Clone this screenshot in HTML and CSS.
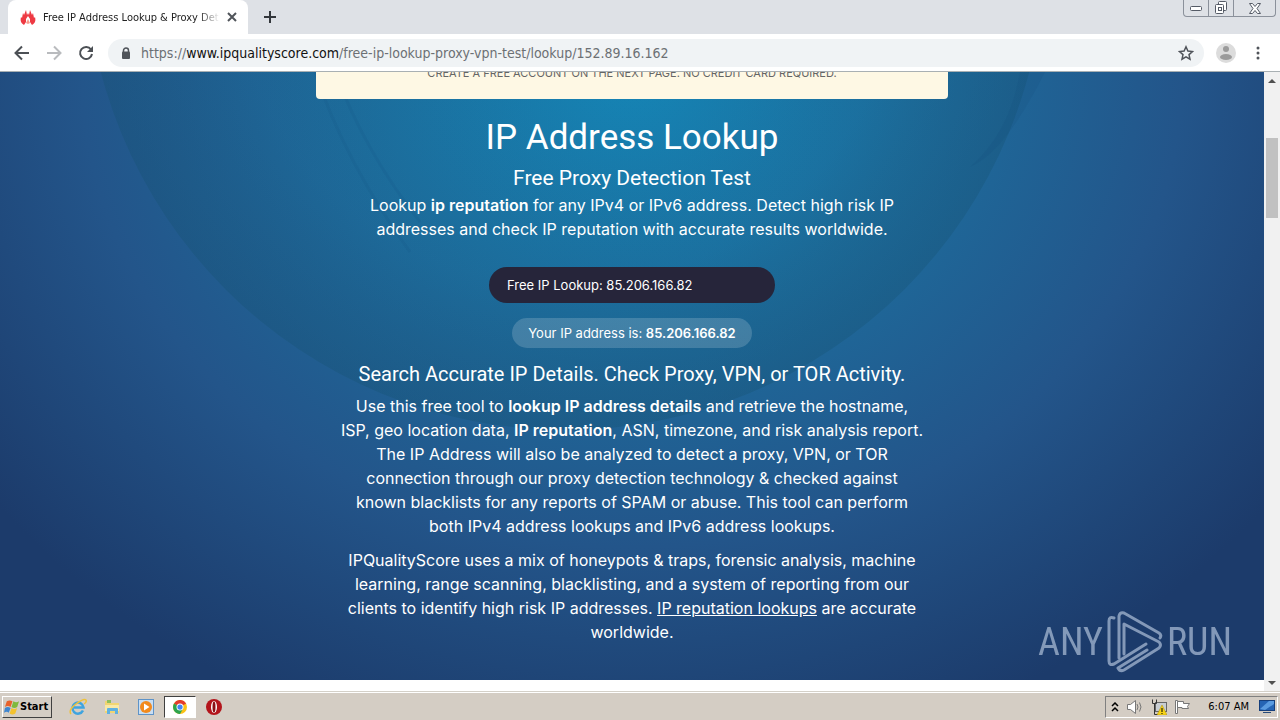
FILE: index.html
```html
<!DOCTYPE html>
<html lang="en">
<head>
  <meta charset="UTF-8" />
  <title>Free IP Address Lookup &amp; Proxy Detection Test</title>
  <link rel="stylesheet" href="styles.css">
</head>
<body>
  <!-- Browser tabs -->
  <header class="tab-strip">
    <div class="tab">
      <svg class="favicon" viewBox="0 0 16 16" width="16" height="16">
        <path fill="#ee3a43" d="M4 16C1 14 0 12 1 8l1 1 1-5 1 2L6 1l1 5 1-2 1 2 1-5 2 5 1-2 1 5 1-1c1 4 0 6-3 8l-2-3 0-3-2-3-2 3 0 3z"/>
        <path fill="#f99a8c" d="M6 14l2-4 2 4-2 1z"/>
      </svg>
      <span class="tab-title">Free IP Address Lookup &amp; Proxy Det</span>
      <button class="icon-btn tab-close" aria-label="Close tab">
        <svg viewBox="0 0 10 10" width="10" height="10"><path d="M1 1l8 8M9 1L1 9" stroke="#50545a" stroke-width="2"/></svg>
      </button>
    </div>
    <button class="icon-btn new-tab" aria-label="New tab">
      <svg viewBox="0 0 12 12" width="12" height="12"><path d="M6 0v12M0 6h12" stroke="#33373c" stroke-width="2"/></svg>
    </button>
    <div class="window-controls">
      <button class="icon-btn" aria-label="Minimize">
        <svg viewBox="0 0 12 5" width="12" height="5"><rect x=".5" y=".5" width="11" height="4" rx="1" fill="#fff" stroke="#555b66"/></svg>
      </button>
      <button class="icon-btn" aria-label="Restore">
        <svg viewBox="0 0 14 14" width="14" height="14" fill="#fff" stroke="#555b66"><rect x="4.500" y=".5" width="8" height="9" rx="1"/><rect x="1.500" y="3.500" width="8" height="9" rx="1"/><rect x="4.500" y="6.500" width="3" height="3"/></svg>
      </button>
      <button class="icon-btn close" aria-label="Close">
        <svg viewBox="0 0 12 11" width="12" height="11"><path d="M.5.5h3L6 3.500 8.500.5h3L8 5.500l3.500 5h-3L6 7.500l-2.500 3h-3l3.500-5z" fill="#fff" stroke="#555b66"/></svg>
      </button>
    </div>
  </header>

  <nav class="toolbar">
    <button class="icon-btn" aria-label="Back">
      <svg viewBox="0 0 16 16" width="16" height="16"><path d="M15 8H2M8 1.500L1.500 8 8 14.500" fill="none" stroke="#4c5055" stroke-width="2"/></svg>
    </button>
    <button class="icon-btn" aria-label="Forward">
      <svg viewBox="0 0 16 16" width="16" height="16"><path d="M1 8h13M8 1.500L14.500 8 8 14.500" fill="none" stroke="#b9bbbe" stroke-width="2"/></svg>
    </button>
    <button class="icon-btn" aria-label="Reload">
      <svg viewBox="0 0 16 16" width="16" height="16"><path d="M13 4.500A6 6 0 1 0 14 9" fill="none" stroke="#4c5055" stroke-width="2"/><path d="M15 1v6H9z" fill="#4c5055"/></svg>
    </button>
    <div class="address">
      <svg viewBox="0 0 10 12" width="10" height="12"><path d="M2.500 5V3.500a2.500 2.500 0 0 1 5 0V5" fill="none" stroke="#50545a" stroke-width="1.500"/><rect x="1" y="4.500" width="8" height="7.500" rx="1" fill="#50545a"/></svg>
      <span class="url">https://<b>www.ipqualityscore.com</b>/free-ip-lookup-proxy-vpn-test/lookup/152.89.16.162</span>
      <button class="icon-btn star" aria-label="Bookmark">
        <svg viewBox="0 0 16 16" width="16" height="16"><path d="M8 1.800l1.900 4.300 4.600.4-3.500 3.100 1 4.600L8 11.800l-4 2.400 1-4.600-3.500-3.100 4.600-.4z" fill="none" stroke="#50545a" stroke-width="1.500"/></svg>
      </button>
    </div>
    <button class="icon-btn avatar" aria-label="Profile">
      <svg viewBox="0 0 20 20" width="20" height="20"><circle cx="10" cy="10" r="10" fill="#dcdcdc"/><circle cx="10" cy="6" r="3" fill="#9b9b9b"/><ellipse cx="10" cy="14" rx="6" ry="3" fill="#9b9b9b"/></svg>
    </button>
    <button class="icon-btn menu" aria-label="Menu">
      <svg viewBox="0 0 4 14" width="4" height="14" fill="#50545a"><circle cx="2" cy="2" r="1.500"/><circle cx="2" cy="7" r="1.500"/><circle cx="2" cy="12" r="1.500"/></svg>
    </button>
  </nav>

  <!-- Page -->
  <div class="viewport">
    <main class="page">
      <div class="hero">
        <svg class="hero-bg" viewBox="0 0 1264 608" preserveAspectRatio="none" aria-hidden="true">
          <defs>
            <radialGradient id="rim" gradientUnits="userSpaceOnUse" cx="565" cy="-122" r="480">
              <stop offset=".7" stop-color="#14506e" stop-opacity=".06"/>
              <stop offset="1" stop-color="#14506e" stop-opacity=".3"/>
            </radialGradient>
          </defs>
          <circle cx="565" cy="-122" r="480" fill="url(#rim)"/>
          <path d="M315 0q30 90 95 180M335 0q30 80 85 150" fill="none" stroke="#134d78" stroke-opacity=".12" stroke-width="3"/>
          <path d="M1045 0q-40 80-75 95q40-35 50-95z" fill="#134d78" fill-opacity=".15"/>
        </svg>
        <div class="hero-inner">
          <div class="banner">CREATE A FREE ACCOUNT ON THE NEXT PAGE. NO CREDIT CARD REQUIRED.</div>
          <h1>IP Address Lookup</h1>
          <h2>Free Proxy Detection Test</h2>
          <p class="lead">Lookup <b>ip reputation</b> for any IPv4 or IPv6 address. Detect high risk IP<br>addresses and check IP reputation with accurate results worldwide.</p>
          <input class="lookup" type="text" aria-label="Free IP Lookup" value="Free IP Lookup: 85.206.166.82">
          <div class="your-ip">Your IP address is: <b>85.206.166.82</b></div>
          <h3>Search Accurate IP Details. Check Proxy, VPN, or TOR Activity.</h3>
          <p>Use this free tool to <b>lookup IP address details</b> and retrieve the hostname,<br>ISP, geo location data, <b>IP reputation</b>, ASN, timezone, and risk analysis report.<br>The IP Address will also be analyzed to detect a proxy, VPN, or TOR<br>connection through our proxy detection technology &amp; checked against<br>known blacklists for any reports of SPAM or abuse. This tool can perform<br>both IPv4 address lookups and IPv6 address lookups.</p>
          <p>IPQualityScore uses a mix of honeypots &amp; traps, forensic analysis, machine<br>learning, range scanning, blacklisting, and a system of reporting from our<br>clients to identify high risk IP addresses. <a href="#">IP reputation lookups</a> are accurate<br>worldwide.</p>
        </div>
      </div>
      <div class="watermark">
        <span>ANY</span>
        <svg viewBox="0 0 56 64" width="56" height="64" fill="none" stroke="currentColor" stroke-width="3" stroke-linejoin="round" stroke-linecap="round">
          <path d="M7 8Q2 6 2 11v40q0 5 5 3l32-20"/>
          <path d="M12 48V6q1-4 5-3l35 20q3 2 1 5"/>
          <path d="M17 44V14l35 18q3 3 0 6L17 60q-4 2-6-2l29-18"/>
        </svg>
        <span>RUN</span>
      </div>
    </main>
    <div class="scrollbar">
      <svg viewBox="0 0 8 4" width="8" height="4"><path d="M0 4l4-4 4 4z" fill="#505050"/></svg>
      <div class="thumb"></div>
      <svg viewBox="0 0 8 4" width="8" height="4"><path d="M0 0l4 4 4-4z" fill="#505050"/></svg>
    </div>
  </div>

  <!-- Taskbar -->
  <footer class="taskbar">
    <button class="start">
      <svg viewBox="0 0 17 16" width="16" height="16">
        <path fill="#e8622c" d="M3 2q3-2 6 0L7 8Q4 6 1 8z"/><path fill="#7fb93c" d="M10 2q3 2 6 0l-2 6q-3 2-6 0z"/>
        <path fill="#3f86d0" d="M1 9q3-2 6 0l-2 5q-2-2-5 0z"/><path fill="#f4c22e" d="M8 9q3 2 6 0l-2 6q-3 2-6 0z"/>
      </svg>
      Start
    </button>
    <div class="quick">
      <button class="task" aria-label="Internet Explorer">
        <svg viewBox="0 0 18 18" width="18" height="18"><path d="M14 12.500A5.500 5.500 0 1 1 14.500 9.500H5" fill="none" stroke="#3fa4df" stroke-width="2.500"/><path d="M2 16Q-1 12 7 6t10-4q1 2-2 4" fill="none" stroke="#efc23a" stroke-width="1.500"/></svg>
      </button>
      <button class="task" aria-label="Explorer">
        <svg viewBox="0 0 18 18" width="18" height="18"><path d="M2 3h5l1 2h8v10H2z" fill="#f1d572"/><path d="M4 2h4v3H4z" fill="#8ebf5d"/><path d="M2 7h14v6H2z" fill="#f8e9a6"/><path d="M4 16v-5q0-1 1-1h9q1 0 1 1v5h-3v-3H7v3z" fill="#5fb1e1"/></svg>
      </button>
      <button class="task" aria-label="Media Player">
        <svg viewBox="0 0 18 18" width="18" height="18"><rect x="1.500" y="1.500" width="15" height="15" fill="#c9def2" stroke="#5e93c8"/><circle cx="9" cy="9" r="6" fill="#f28a1d"/><path d="M7 5.500L12.500 9 7 12.500z" fill="#fff"/></svg>
      </button>
      <button class="task active" aria-label="Chrome">
        <svg viewBox="0 0 16 16" width="14" height="14"><circle cx="8" cy="8" r="8" fill="#fbc116"/><path d="M8 8L1.100 4A8 8 0 0 1 15 4z" fill="#e33b2e"/><path d="M8 8L1.100 4A8 8 0 0 0 8 16l3.500-6z" fill="#2da44e"/><circle cx="8" cy="8" r="4" fill="#fff"/><circle cx="8" cy="8" r="3" fill="#4285f4"/></svg>
      </button>
      <button class="task" aria-label="Opera">
        <svg viewBox="0 0 18 18" width="18" height="18"><circle cx="9" cy="9" r="8" fill="#b3141b"/><ellipse cx="9" cy="9" rx="3" ry="6" fill="#fff"/><ellipse cx="9" cy="9" rx="1.500" ry="5.500" fill="#8a0e14"/></svg>
      </button>
    </div>
    <div class="tray">
      <svg viewBox="0 0 8 10" width="8" height="10"><path d="M1 4l3-3 3 3M1 9l3-3 3 3" fill="none" stroke="#000" stroke-width="1.500"/></svg>
      <svg viewBox="0 0 18 16" width="18" height="16" fill="#fff" stroke="#777"><path d="M1.500 5.500h3l5-4v13l-5-4h-3z"/><path d="M11 5q2 3 0 6M13.500 3.500q3 4.500 0 9" fill="none"/></svg>
      <svg viewBox="0 0 16 16" width="16" height="16"><rect x="4.500" y="3.500" width="11" height="9" fill="#c8cdd2" stroke="#666"/><path d="M1.500.5v4h4v-4M3.500 4.500v11h4" fill="none" stroke="#333"/><path d="M11 6l5 10H6z" fill="#f7d417" stroke="#a98a00" stroke-width=".5"/><path d="M11 9v4M11 14v1" stroke="#000"/></svg>
      <svg viewBox="0 0 17 16" width="17" height="16" fill="#fff" stroke="#777"><path d="M1.500 1.500h2v13h-2z"/><path d="M3.500 2.500h6v2h6l-2 3 1 2H8v-1H3.500z"/></svg>
      <span class="clock">6:07 AM</span>
      <svg viewBox="0 0 16 14" width="16" height="14"><rect x=".5" y=".5" width="15" height="10" fill="#2564b4" stroke="#163f7c"/><path d="M1 9l9-8h5v3L6 10z" fill="#5a9be0"/><path d="M4 12h8v1H4z" fill="#284a78"/></svg>
    </div>
  </footer>
</body>
</html>
```

FILE: styles.css
```css
* {
  box-sizing: border-box;
}

html, body {
  margin: 0;
  padding: 0;
  overflow: hidden;
}

body {
  display: flex;
  flex-direction: column;
  height: 100vh;
  background: #fff;
  font-family: 'DejaVu Sans Condensed', 'DejaVu Sans', sans-serif;
  font-size: 11px;
  color: #222;
}

svg {
  display: block;
  flex-shrink: 0;
}

.icon-btn {
  display: flex;
  align-items: center;
  justify-content: center;
  padding: 0;
  border: none;
  background: none;
}

/* Tabs */
.tab-strip {
  display: flex;
  height: 34px;
  flex-shrink: 0;
  padding-left: 8px;
  background: #dee1e6;
}

.tab {
  display: flex;
  align-items: center;
  gap: 7px;
  width: 240px;
  padding: 0 11px 0 12px;
  background: #fff;
  border-radius: 8px 8px 0 0;
}

.tab-title {
  flex: 1;
  white-space: nowrap;
  mask-image: linear-gradient(to right, #000 88%, transparent);
}

.new-tab {
  width: 44px;
}

.window-controls {
  display: flex;
  height: 17px;
  margin-left: auto;
  margin-right: 4px;
  border: 1px solid #8b919b;
  border-top: none;
  border-radius: 0 0 4px 4px;
}

.window-controls .icon-btn {
  width: 25px;
  border-right: 1px solid #8b919b;
}

.window-controls .close {
  width: 41px;
  border-right: none;
}

/* Toolbar */
.toolbar {
  display: flex;
  align-items: center;
  gap: 16px;
  height: 38px;
  flex-shrink: 0;
  padding: 0 20px 0 14px;
  border-bottom: 1px solid #a9b0b3;
}

.address {
  display: flex;
  flex: 1;
  align-items: center;
  gap: 10px;
  height: 28px;
  margin-left: -2px;
  margin-right: -4px;
  padding: 0 10px 0 13px;
  border-radius: 14px;
  background: #f0f3f5;
}

.avatar {
  margin-right: 4px;
}

.url {
  flex: 1;
  font-size: 14px;
  color: #6c7074;
}

.url b {
  font-weight: normal;
  color: #111;
}

/* Page */
.viewport {
  display: flex;
  flex: 1;
  min-height: 0;
}

.page {
  position: relative;
  flex: 1;
  overflow: hidden;
}

.hero {
  position: relative;
  padding-bottom: 34px;
  background: radial-gradient(ellipse 64% 115% at 50% 0, #1588ba 0%, #1d6d9d 35%, #23558a 68%, #1c3b6b 100%);
  color: #fff;
  text-align: center;
  font-family: Inter, sans-serif;
  font-size: 16px;
  line-height: 24px;
}

.hero-bg {
  position: absolute;
  inset: 0;
  width: 100%;
  height: 100%;
}

.hero-inner {
  position: relative;
  display: flex;
  flex-direction: column;
  align-items: center;
}

.banner {
  width: 50%;
  margin-top: -9px;
  padding-bottom: 16px;
  border-radius: 0 0 4px 4px;
  background: #fef8e4;
  color: #666;
  font-size: 11px;
  line-height: 20px;
}

h1, h2, h3 {
  margin: 0;
  font-family: Roboto, sans-serif;
  font-weight: normal;
}

h1 {
  margin-top: 17px;
  font-size: 35px;
  line-height: 44px;
}

h2 {
  margin-top: 6px;
  font-size: 21px;
  line-height: 24px;
}

h3 {
  margin-top: 14px;
  font-size: 20px;
  line-height: 24px;
}

.hero p {
  margin: 8px 0 2px;
}

.hero .lead {
  margin: 3px 0 26px;
}

.hero b {
  font-weight: 600;
}

.hero a {
  color: #fff;
}

.lookup {
  width: 286px;
  height: 36px;
  padding: 0 18px;
  border: none;
  border-radius: 18px;
  background: #26253a;
  color: #fff;
  font-family: Inter, sans-serif;
  font-size: 13px;
}

.your-ip {
  margin-top: 15px;
  padding: 0 16px;
  border-radius: 15px;
  background: rgba(255, 255, 255, 0.17);
  font-size: 13px;
  line-height: 30px;
}

.watermark {
  position: absolute;
  right: 32px;
  bottom: 18px;
  display: flex;
  align-items: center;
  gap: 4px;
  color: #c8d7eb;
  opacity: 0.6;
  font-family: 'Roboto Condensed', 'Liberation Sans Narrow', Roboto, sans-serif;
  font-size: 38px;
}

.scrollbar {
  display: flex;
  flex-direction: column;
  align-items: center;
  width: 16px;
  padding: 7px 0;
  background: #f1f1f1;
}

.thumb {
  width: 12px;
  height: 80px;
  margin-top: 55px;
  margin-bottom: auto;
  background: #c1c1c1;
}

/* Taskbar */
.taskbar {
  display: flex;
  align-items: center;
  height: 28px;
  flex-shrink: 0;
  padding-left: 2px;
  border-top: 1px solid #fff;
  box-shadow: 0 -1px #d4d0c8;
  background: #d4cdc4;
}

.start {
  display: flex;
  align-items: center;
  height: 22px;
  padding: 0 3px 0 1px;
  border: 1px solid;
  border-color: #fff #404040 #404040 #fff;
  background: #d4cdc4;
  font-family: 'DejaVu Sans Condensed', 'DejaVu Sans', sans-serif;
  font-size: 11px;
  font-weight: bold;
}

.quick {
  display: flex;
  gap: 2px;
  margin-left: 10px;
}

.task {
  display: flex;
  align-items: center;
  justify-content: center;
  width: 32px;
  height: 22px;
  padding: 0;
  border: 1px solid transparent;
  background: none;
}

.task.active {
  border-color: #404040 #fff #fff #404040;
  background: #fff;
}

.tray {
  display: flex;
  align-items: center;
  gap: 7px;
  height: 22px;
  margin-left: auto;
  margin-right: 2px;
  padding: 0 2px 0 5px;
  border: 1px solid;
  border-color: #808080 #fff #fff #808080;
  color: #000;
}

.clock {
  margin: 0 3px 0 10px;
}
```
